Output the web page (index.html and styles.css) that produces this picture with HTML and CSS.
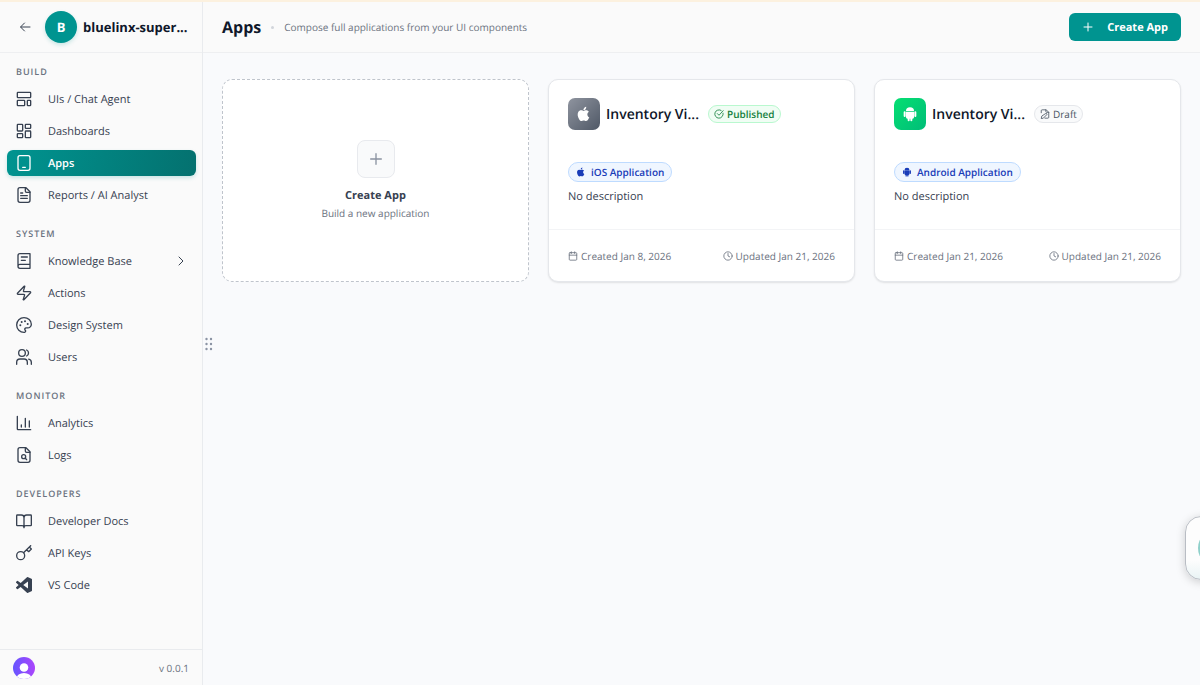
FILE: index.html
```
<!DOCTYPE html>
<html lang="en">
<head>
  <meta charset="UTF-8"/>
  <meta name="viewport" content="width=device-width, initial-scale=1.0"/>
  <title>Apps</title>
  <link rel="stylesheet" href="styles.css">
</head>
<body>

<svg class="sprite" aria-hidden="true">
  <symbol id="apple" viewBox="0 0 24 24">
    <path fill="currentColor" d="M17 12.600c0-2.700 2.200-4 2.300-4.100-1.300-1.800-3.200-2.100-3.900-2.100-1.700-.2-3.200 1-4.100 1-.8 0-2.100-1-3.500-.9-1.800 0-3.500 1-4.400 2.600-1.900 3.300-.5 8.100 1.300 10.700.9 1.300 2 2.800 3.400 2.700 1.300-.1 1.900-.9 3.500-.9s2.100.9 3.500.8c1.500 0 2.400-1.300 3.300-2.600 1-1.500 1.500-2.900 1.500-3-.1 0-2.900-1.100-2.900-4.200zM14.300 4.700c.7-.9 1.200-2.100 1.100-3.400-1.100.1-2.300.7-3.100 1.600-.7.8-1.300 2-1.100 3.200 1.200.1 2.400-.6 3.100-1.400z"/>
  </symbol>
  <symbol id="android" viewBox="0 0 24 24">
    <path fill="currentColor" d="M6 7.500a6 5.500 0 0 1 12 0zM6 8.500h12V17a2 2 0 0 1-2 2h-.5v2.500a1.500 1.500 0 0 1-3 0V19h-1v2.500a1.500 1.500 0 0 1-3 0V19H8a2 2 0 0 1-2-2zM2.500 9.500a1.500 1.500 0 0 1 3 0V15a1.500 1.500 0 0 1-3 0zM18.500 9.500a1.500 1.500 0 0 1 3 0V15a1.500 1.500 0 0 1-3 0z"/>
  </symbol>
  <symbol id="calendar" viewBox="0 0 24 24">
    <rect x="3" y="4" width="18" height="18" rx="2"/><path d="M8 2v4M16 2v4M3 10h18"/>
  </symbol>
  <symbol id="clock" viewBox="0 0 24 24">
    <circle cx="12" cy="12" r="10"/><path d="M12 6v6l4 2"/>
  </symbol>
  <symbol id="plus" viewBox="0 0 24 24">
    <path d="M4 12h16M12 4v16"/>
  </symbol>
</svg>

<div class="page">
  <aside class="sidebar">
    <div class="workspace">
      <button class="back-button" aria-label="Go Back">
        <svg class="icon" viewBox="0 0 24 24"><path d="m11 4-8 8 8 8M4 12h18"/></svg>
      </button>
      <div class="workspace-logo">B</div>
      <div class="workspace-name">bluelinx-super...</div>
    </div>

    <nav class="nav">
      <section class="nav-group">
        <h2>Build</h2>
        <a href="#" class="nav-item">
          <svg class="icon" viewBox="0 0 24 24"><rect x="2" y="2" width="20" height="8" rx="1"/><rect x="2" y="14" width="11" height="8" rx="1"/><rect x="17" y="14" width="5" height="8" rx="1"/></svg>
          <span>UIs / Chat Agent</span>
        </a>
        <a href="#" class="nav-item">
          <svg class="icon" viewBox="0 0 24 24"><rect x="2" y="2" width="8" height="10" rx="1"/><rect x="14" y="2" width="8" height="6" rx="1"/><rect x="14" y="12" width="8" height="10" rx="1"/><rect x="2" y="16" width="8" height="6" rx="1"/></svg>
          <span>Dashboards</span>
        </a>
        <a href="#" class="nav-item active" aria-current="page">
          <svg class="icon" viewBox="0 0 24 24"><rect x="3" y="1" width="18" height="22" rx="3"/><path d="M10 18.500h4"/></svg>
          <span>Apps</span>
        </a>
        <a href="#" class="nav-item">
          <svg class="icon" viewBox="0 0 24 24"><path d="M15 1H6a3 3 0 0 0-3 3v16a3 3 0 0 0 3 3h12a3 3 0 0 0 3-3V7z"/><path d="M14 1v5a2 2 0 0 0 2 2h5M7 9h3M7 13h10M7 17h10"/></svg>
          <span>Reports / AI Analyst</span>
        </a>
      </section>

      <section class="nav-group">
        <h2>System</h2>
        <a href="#" class="nav-item">
          <svg class="icon" viewBox="0 0 24 24"><path d="M3 20V4a3 3 0 0 1 3-3h15v22H6a3 3 0 0 1 0-6h15M8 6h9M8 11h6"/></svg>
          <span>Knowledge Base</span>
          <svg class="icon chevron" viewBox="0 0 24 24"><path d="m8 4 8 8-8 8"/></svg>
        </a>
        <a href="#" class="nav-item">
          <svg class="icon" viewBox="0 0 24 24"><path d="M3 14a1 1 0 0 1-.8-1.600l10-10.400a.5.500 0 0 1 .9.500L11.200 8.600A1 1 0 0 0 12.100 10H21a1 1 0 0 1 .8 1.600l-10 10.400a.5.500 0 0 1-.9-.5l1.900-6.100A1 1 0 0 0 11.900 14z"/></svg>
          <span>Actions</span>
        </a>
        <a href="#" class="nav-item">
          <svg class="icon" viewBox="0 0 24 24"><path d="M12 23a11 11 0 1 1 0-22c6.100 0 11 4.400 11 9.900a5.500 5.500 0 0 1-5.500 5.500h-2.400a1.900 1.900 0 0 0-1.500 3.100l.3.400A1.900 1.900 0 0 1 12 23z"/><g fill="currentColor" stroke="none"><circle cx="13.500" cy="6.500" r="1.500"/><circle cx="17.500" cy="10.500" r="1.500"/><circle cx="6.500" cy="12.500" r="1.500"/><circle cx="8.500" cy="7.500" r="1.500"/></g></svg>
          <span>Design System</span>
        </a>
        <a href="#" class="nav-item">
          <svg class="icon" viewBox="0 0 24 24"><circle cx="9" cy="6" r="5"/><path d="M1 23v-3a5 5 0 0 1 5-5h6a5 5 0 0 1 5 5v3M16 1.500a5 5 0 0 1 0 9M23 23v-3a5 5 0 0 0-4-4.700"/></svg>
          <span>Users</span>
        </a>
      </section>

      <section class="nav-group">
        <h2>Monitor</h2>
        <a href="#" class="nav-item">
          <svg class="icon" viewBox="0 0 24 24"><path d="M2 2v19a1 1 0 0 0 1 1h19M8 18v-3M14 18V5M20 18V9"/></svg>
          <span>Analytics</span>
        </a>
        <a href="#" class="nav-item">
          <svg class="icon" viewBox="0 0 24 24"><path d="M15 1H6a3 3 0 0 0-3 3v16a3 3 0 0 0 3 3h12a3 3 0 0 0 3-3V7z"/><path d="M14 1v5a2 2 0 0 0 2 2h5"/><circle cx="11.500" cy="14.500" r="3"/><path d="m14 17 2 2"/></svg>
          <span>Logs</span>
        </a>
      </section>

      <section class="nav-group">
        <h2>Developers</h2>
        <a href="#" class="nav-item">
          <svg class="icon" viewBox="0 0 24 24"><path d="M12 7v15M2 19a1 1 0 0 1-1-1V4a1 1 0 0 1 1-1h6a4 4 0 0 1 4 4 4 4 0 0 1 4-4h6a1 1 0 0 1 1 1v14a1 1 0 0 1-1 1h-7a3 3 0 0 0-3 3 3 3 0 0 0-3-3z"/></svg>
          <span>Developer Docs</span>
        </a>
        <a href="#" class="nav-item">
          <svg class="icon" viewBox="0 0 24 24"><circle cx="7" cy="16" r="6"/><path d="M11.300 11.700 22 1M16 7l3 3 4-4-3-3"/></svg>
          <span>API Keys</span>
        </a>
        <a href="#" class="nav-item">
          <svg class="icon" viewBox="0 0 24 24"><path fill="currentColor" stroke="none" fill-rule="evenodd" d="M23.200 2.600 18.200.2a1.500 1.500 0 0 0-1.700.3L7 9.100 2.900 6a1 1 0 0 0-1.300.1L.3 7.300a1 1 0 0 0 0 1.500L3.900 12 .3 15.200a1 1 0 0 0 0 1.500l1.300 1.200a1 1 0 0 0 1.300.1L7 14.900l9.500 8.600a1.500 1.500 0 0 0 1.700.3l5-2.400a1.500 1.500 0 0 0 .8-1.400V4a1.500 1.500 0 0 0-.8-1.400zM18 17.400 10.800 12 18 6.600z"/></svg>
          <span>VS Code</span>
        </a>
      </section>
    </nav>

    <div class="sidebar-footer">
      <button class="avatar" aria-label="Account">
        <svg viewBox="0 0 22 22">
          <defs>
            <linearGradient id="avatar-fill" x1="0" x2="1"><stop offset="0" stop-color="#6655ff"/><stop offset="1" stop-color="#ab45fc"/></linearGradient>
            <clipPath id="avatar-clip"><circle cx="11" cy="11" r="11"/></clipPath>
          </defs>
          <g clip-path="url(#avatar-clip)">
            <rect width="22" height="22" fill="url(#avatar-fill)"/>
            <circle cx="11" cy="10.500" r="4.300" fill="#fff"/>
            <ellipse cx="11" cy="21.500" rx="7.500" ry="5.500" fill="#fff"/>
          </g>
        </svg>
      </button>
      <span>v 0.0.1</span>
    </div>

    <div class="resize-handle">
      <svg viewBox="0 0 8 14"><g fill="#8b93a3"><circle cx="1.500" cy="2" r="1.200"/><circle cx="6" cy="2" r="1.200"/><circle cx="1.500" cy="7" r="1.200"/><circle cx="6" cy="7" r="1.200"/><circle cx="1.500" cy="12" r="1.200"/><circle cx="6" cy="12" r="1.200"/></g></svg>
    </div>
  </aside>

  <main class="main">
    <header class="header">
      <h1>Apps</h1>
      <span class="dot"></span>
      <p>Compose full applications from your UI components</p>
      <button class="create-button">
        <svg class="icon" viewBox="0 0 24 24"><use href="#plus"/></svg>
        Create App
      </button>
    </header>

    <div class="cards">
      <button class="create-card">
        <span class="create-icon"><svg class="icon" viewBox="0 0 24 24"><use href="#plus"/></svg></span>
        <strong>Create App</strong>
        <span class="create-text">Build a new application</span>
      </button>

      <article class="card">
        <div class="card-body">
          <div class="card-head">
            <div class="app-icon ios"><svg><use href="#apple"/></svg></div>
            <h3>Inventory Vi...</h3>
            <span class="status published">
              <svg class="icon" viewBox="0 0 24 24"><path d="M21.800 10A10 10 0 1 1 17 3.300M8 11l4 4L22 4"/></svg>
              Published
            </span>
          </div>
          <span class="platform"><svg><use href="#apple"/></svg>iOS Application</span>
          <p>No description</p>
        </div>
        <div class="card-footer">
          <span><svg class="icon"><use href="#calendar"/></svg>Created Jan 8, 2026</span>
          <span><svg class="icon"><use href="#clock"/></svg>Updated Jan 21, 2026</span>
        </div>
      </article>

      <article class="card">
        <div class="card-body">
          <div class="card-head">
            <div class="app-icon droid"><svg><use href="#android"/></svg></div>
            <h3>Inventory Vi...</h3>
            <span class="status">
              <svg class="icon" viewBox="0 0 24 24"><path d="M3 9V4a2 2 0 0 1 2-2h10l6 6v12a2 2 0 0 1-2 2h-7M14 2v4a2 2 0 0 0 2 2h5M13 11a2 2 0 0 1 3 3l-8 8-5 1 1-5z"/></svg>
              Draft
            </span>
          </div>
          <span class="platform"><svg><use href="#android"/></svg>Android Application</span>
          <p>No description</p>
        </div>
        <div class="card-footer">
          <span><svg class="icon"><use href="#calendar"/></svg>Created Jan 21, 2026</span>
          <span><svg class="icon"><use href="#clock"/></svg>Updated Jan 21, 2026</span>
        </div>
      </article>
    </div>
  </main>
</div>

<button class="chat-widget" aria-label="Open chat"><span></span></button>

</body>
</html>
```
FILE: styles.css
```
* {
  box-sizing: border-box;
}

body {
  margin: 0;
  font-family: 'Open Sans', 'Noto Sans', sans-serif;
  font-size: 11px;
  color: #374151;
  background-color: #f9fafc;
  text-rendering: geometricPrecision;
}

h1, h2, h3, p {
  margin: 0;
}

button {
  font-family: inherit;
  text-rendering: inherit;
  border: none;
  padding: 0;
  cursor: pointer;
}

svg {
  display: block;
  flex-shrink: 0;
}

.sprite {
  position: absolute;
  width: 0;
  height: 0;
}

.icon {
  width: 16px;
  height: 16px;
  fill: none;
  stroke: currentColor;
  stroke-width: 2;
  stroke-linecap: round;
  stroke-linejoin: round;
}

.page {
  display: flex;
  min-height: 100vh;
  border-top: 2px solid #fcf1df;
}

/* sidebar */
.sidebar {
  position: relative;
  display: flex;
  flex-direction: column;
  width: 203px;
  flex-shrink: 0;
  background-color: #fafafa;
  border-right: 1px solid #e9ebee;
}

.workspace {
  display: flex;
  align-items: center;
  height: 51px;
  padding: 0 16px 0 19px;
  border-bottom: 1px solid #eeeff1;
}

.back-button {
  background: none;
  color: #374151;
}

.back-button .icon {
  width: 12px;
  height: 12px;
}

.workspace-logo {
  display: flex;
  align-items: center;
  justify-content: center;
  width: 32px;
  height: 32px;
  flex-shrink: 0;
  margin: 0 6px 0 14px;
  border-radius: 50%;
  background-color: #009490;
  box-shadow: 0 2px 4px rgba(0, 148, 144, 0.2);
  color: white;
  font-size: 13px;
  font-weight: bold;
}

.workspace-name {
  white-space: nowrap;
  font-size: 13px;
  font-weight: bold;
  color: #0f172a;
}

.nav {
  flex: 1;
  display: flex;
  flex-direction: column;
  gap: 18px;
  padding: 11px 6px 11px 7px;
}

.nav-group {
  display: flex;
  flex-direction: column;
  gap: 6px;
}

.nav-group h2 {
  padding-left: 9px;
  font-size: 9px;
  line-height: 16px;
  font-weight: 600;
  letter-spacing: 1px;
  text-transform: uppercase;
  color: #6b7280;
}

.nav-item {
  display: flex;
  align-items: center;
  gap: 16px;
  height: 26px;
  padding: 0 9px;
  border-radius: 6px;
  font-size: 11px;
  color: #374151;
  text-decoration: none;
}

.nav-item.active {
  background: linear-gradient(100deg, #009490, #04716f);
  box-shadow: 0 2px 4px rgba(0, 148, 144, 0.2);
  color: white;
  font-weight: 600;
}

.nav-item .chevron {
  width: 12px;
  height: 12px;
  margin-left: auto;
}

.sidebar-footer {
  display: flex;
  align-items: center;
  justify-content: space-between;
  height: 36px;
  padding: 0 13px;
  border-top: 1px solid #e9ebee;
  font-size: 10px;
  color: #6b7280;
}

.avatar {
  width: 22px;
  height: 22px;
  background: none;
}

.resize-handle {
  position: absolute;
  top: 50%;
  left: 100%;
  padding: 0 3px;
  transform: translateY(-50%);
}

.resize-handle svg {
  width: 8px;
  height: 14px;
}

/* main */
.main {
  flex: 1;
  min-width: 0;
}

.header {
  display: flex;
  align-items: center;
  height: 51px;
  padding: 0 19px;
  background-color: #fafafa;
  border-bottom: 1px solid #eeeff1;
}

.header h1 {
  font-size: 16px;
  font-weight: bold;
  color: #0f172a;
}

.dot {
  width: 3px;
  height: 3px;
  margin: 0 10px;
  border-radius: 50%;
  background-color: #d1d5db;
}

.header p {
  font-size: 10px;
  color: #6b7280;
}

.create-button {
  display: flex;
  align-items: center;
  gap: 13px;
  height: 28px;
  margin-left: auto;
  padding: 0 13px;
  border-radius: 6px;
  background-color: #009490;
  color: white;
  font-size: 11px;
  font-weight: bold;
}

.create-button .icon {
  width: 12px;
  height: 12px;
}

.cards {
  display: grid;
  grid-template-columns: repeat(auto-fill, minmax(280px, 1fr));
  gap: 19px;
  padding: 26px 19px;
}

.create-card {
  display: flex;
  flex-direction: column;
  align-items: center;
  justify-content: center;
  border: 1px dashed #bfc4cc;
  border-radius: 10px;
  background-color: white;
}

.create-icon {
  display: flex;
  align-items: center;
  justify-content: center;
  width: 38px;
  height: 38px;
  margin-bottom: 10px;
  border: 1px solid #e8eaee;
  border-radius: 8px;
  background-color: #f9fafb;
  color: #8b93a1;
}

.create-card strong {
  font-size: 11px;
  line-height: 16px;
  font-weight: bold;
  color: #374151;
}

.create-text {
  font-size: 10px;
  line-height: 18px;
  color: #6b7280;
}

.card {
  display: flex;
  flex-direction: column;
  min-width: 0;
  border: 1px solid #e5e7eb;
  border-radius: 10px;
  background-color: white;
  box-shadow: 0 1px 2px rgba(0, 0, 0, 0.1);
}

.card-body {
  flex: 1;
  padding: 18px 19px 23px;
}

.card-head {
  display: flex;
  align-items: center;
  gap: 6px;
  margin-bottom: 32px;
}

.app-icon {
  display: flex;
  align-items: center;
  justify-content: center;
  width: 32px;
  height: 32px;
  border-radius: 7px;
  color: white;
}

.app-icon svg {
  width: 16px;
  height: 16px;
}

.app-icon.ios {
  background: linear-gradient(135deg, #8f949f, #4f5866);
}

.app-icon.droid {
  background: linear-gradient(135deg, #05df72, #00bd78);
}

.card h3 {
  min-width: 96px;
  white-space: nowrap;
  font-size: 14px;
  font-weight: 600;
  color: #0f172a;
}

.status {
  display: flex;
  align-items: center;
  gap: 3px;
  height: 18px;
  padding: 0 5px;
  border: 1px solid #e5e7eb;
  border-radius: 9px;
  background-color: #f9fafb;
  font-size: 10px;
  font-weight: 500;
  color: #4b5563;
}

.status .icon {
  width: 10px;
  height: 10px;
}

.status.published {
  border-color: #b9f8cf;
  background-color: #f0fdf4;
  color: #15803d;
  font-weight: 600;
}

.platform {
  display: flex;
  align-items: center;
  gap: 5px;
  width: fit-content;
  height: 20px;
  padding: 0 7px;
  border: 1px solid #bedbff;
  border-radius: 10px;
  background-color: #eff6ff;
  font-size: 10px;
  font-weight: 600;
  color: #193cb8;
}

.platform svg {
  width: 10px;
  height: 10px;
}

.card-body p {
  margin-top: 6px;
  font-size: 11px;
  line-height: 18px;
}

.card-footer {
  display: flex;
  align-items: center;
  justify-content: space-between;
  height: 52px;
  padding: 0 19px;
  border-top: 1px solid #f3f4f6;
  font-size: 10px;
  color: #6b7280;
}

.card-footer span {
  display: flex;
  align-items: center;
  gap: 3px;
}

.card-footer .icon {
  width: 10px;
  height: 10px;
}

/* floating chat button, tucked into the right edge */
.chat-widget {
  position: fixed;
  right: -49px;
  bottom: 105px;
  display: flex;
  align-items: center;
  justify-content: center;
  width: 64px;
  height: 64px;
  border: 1px solid #b9bdc4;
  border-radius: 16px;
  background: linear-gradient(#fdfdfd 70%, #e9f4f5);
  box-shadow: 0 2px 10px rgba(0, 0, 0, 0.18);
}

.chat-widget span {
  width: 38px;
  height: 38px;
  border-radius: 50%;
  background-color: #8fd0ca;
}
```
